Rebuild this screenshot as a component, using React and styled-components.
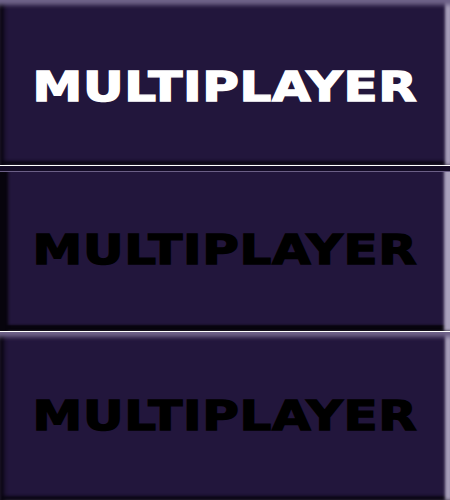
import styled, { createGlobalStyle } from "styled-components"

const GlobalStyle = createGlobalStyle`
  html, body {
    margin: 0;
    padding: 0;
    background: #fff;
    width: 450px;
    height: 500px;
    overflow: hidden;
  }
`

const Stack = styled.div`
  display: flex;
  flex-direction: column;
  gap: 1px;
  width: 450px;
  height: 500px;
`

const shadows = {
  raised: `
    inset 0 7px 4px -2px #6f6389,
    inset 5px 0 4px -1px #08050f,
    inset -6px 0 3px -1px #a9a1bc,
    inset 0 -5px 3px -1px #0b0716
  `,
  pressed: `
    inset 0 5px 0 0 #140c26,
    inset 0 6px 0 0 #6b5f86,
    inset 8px 0 3px 0 #07040d,
    inset -7px 0 3px -1px #aaa2bd,
    inset 0 -6px 2px 0 #07040d
  `,
}

const MenuButton = styled.button`
  flex: 0 0 ${(p) => p.$height}px;
  display: flex;
  align-items: center;
  justify-content: center;
  padding: ${(p) => p.$shift}px 0 0 0;
  margin: 0;
  border: none;
  background: #22163c;
  box-shadow: ${(p) => shadows[p.$variant]};
  cursor: pointer;
`

const Label = styled.span`
  display: inline-block;
  font-family: "DejaVu Sans", sans-serif;
  font-weight: 700;
  font-size: 40px;
  line-height: 1;
  letter-spacing: 0.5px;
  color: ${(p) => p.$color};
  -webkit-text-stroke: 1.4px ${(p) => p.$color};
  transform: scaleX(1.25);
`

const App = () => {
  return (
    <>
      <GlobalStyle />
      <Stack>
        <MenuButton $height={165} $variant="raised" $shift={8}>
          <Label $color="#ffffff">MULTIPLAYER</Label>
        </MenuButton>
        <MenuButton $height={165} $variant="pressed" $shift={2}>
          <Label $color="#000000">MULTIPLAYER</Label>
        </MenuButton>
        <MenuButton $height={168} $variant="raised" $shift={-6}>
          <Label $color="#000000">MULTIPLAYER</Label>
        </MenuButton>
      </Stack>
    </>
  )
}

export default App
